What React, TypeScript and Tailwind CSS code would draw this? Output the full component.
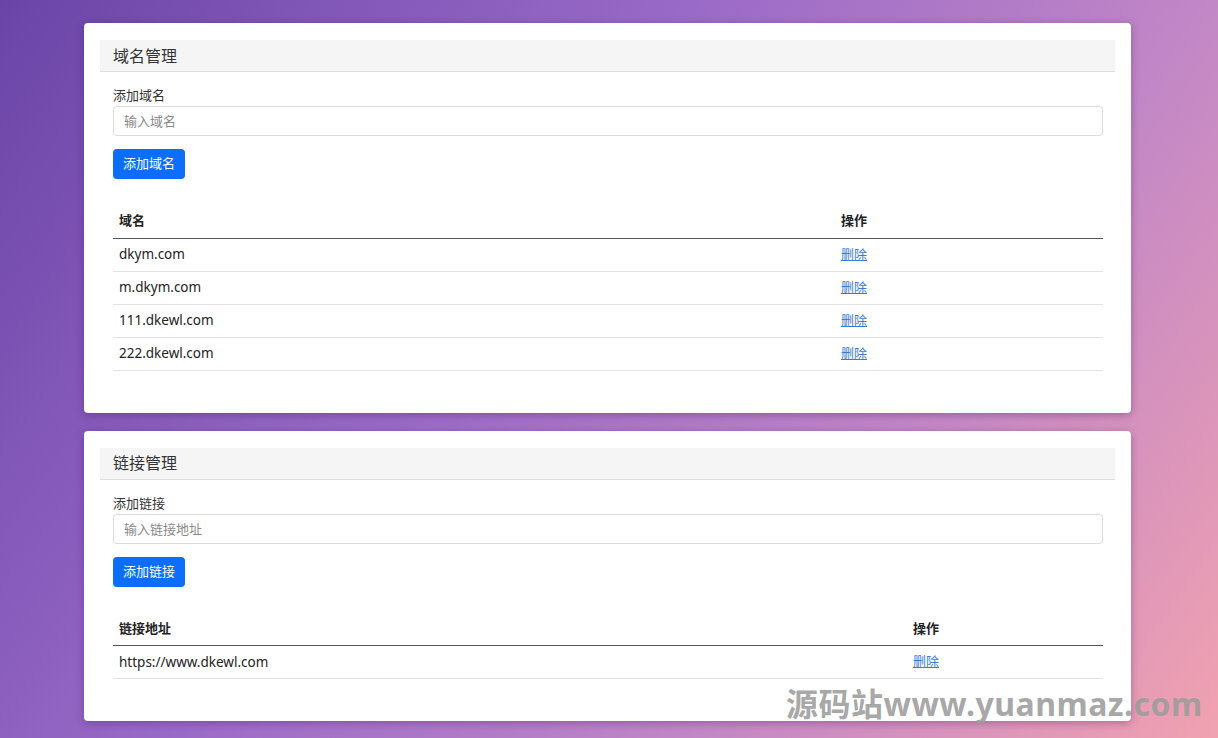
const font = "font-['Noto_Sans','Noto_Sans_CJK_SC',sans-serif]";

type Section = {
  title: string;
  label: string;
  placeholder: string;
  button: string;
  colHead: string;
  firstColWidth: string;
  rows: string[];
};

const sections: Section[] = [
  {
    title: "域名管理",
    label: "添加域名",
    placeholder: "输入域名",
    button: "添加域名",
    colHead: "域名",
    firstColWidth: "w-[722px]",
    rows: ["dkym.com", "m.dkym.com", "111.dkewl.com", "222.dkewl.com"],
  },
  {
    title: "链接管理",
    label: "添加链接",
    placeholder: "输入链接地址",
    button: "添加链接",
    colHead: "链接地址",
    firstColWidth: "w-[794px]",
    rows: ["https://www.dkewl.com"],
  },
];

function Card({ s }: { s: Section }) {
  return (
    <div className="bg-white rounded-[4px] shadow-[0_2px_8px_rgba(60,20,90,0.35)] px-4 pt-[17px] pb-[42px]">
      <div className="h-[32px] bg-[#f5f5f5] border-b border-[#dedede] flex items-center px-[13px]">
        <h2 className="text-[16px] text-[#333]">{s.title}</h2>
      </div>
      <div className="pl-[13px] pr-[12px]">
        <label className="block mt-[14px] text-[13px] leading-[19px] text-[#333]">{s.label}</label>
        <input
          className="block w-full h-[30px] mt-[1px] px-[10px] text-[13px] border border-[#dcdcdc] rounded-[4px] outline-none placeholder:text-[#8a8a8a]"
          placeholder={s.placeholder}
        />
        <button className="mt-[13px] h-[30px] px-[10px] rounded-[4px] bg-[#0d6efd] text-white text-[13px]">
          {s.button}
        </button>
        <table className="w-full mt-[25px] border-collapse text-[13px] text-[#222]">
          <thead>
            <tr className="h-[34px] border-b-[1.5px] border-[#555]">
              <th className={`${s.firstColWidth} text-left font-bold px-[6px]`}>{s.colHead}</th>
              <th className="text-left font-bold px-[6px]">操作</th>
            </tr>
          </thead>
          <tbody>
            {s.rows.map(r => (
              <tr key={r} className="h-[33px] border-b border-[#e3e3e3]">
                <td className="px-[6px] text-[13.5px]">{r}</td>
                <td className="px-[6px]">
                  <a href="#" className="text-[#3a7ad8] underline">删除</a>
                </td>
              </tr>
            ))}
          </tbody>
        </table>
      </div>
    </div>
  );
}

export default function App() {
  return (
    <main
      className={`${font} relative min-h-screen overflow-hidden pt-[23px] pb-6 bg-[linear-gradient(125deg,#6a45a7_0%,#9a6ac8_40%,#c287c6_70%,#f2a2b0_100%)]`}
    >
      <div className="ml-[84px] w-[1047px] flex flex-col gap-[18px]">
        {sections.map(s => (
          <Card key={s.title} s={s} />
        ))}
      </div>
      <div className="absolute left-[786px] top-[684px] whitespace-nowrap text-[32px] leading-[40px] font-bold text-[#9c9c9c]/90 tracking-[0.5px] pointer-events-none">
        源码站www.yuanmaz.com
      </div>
    </main>
  );
}
